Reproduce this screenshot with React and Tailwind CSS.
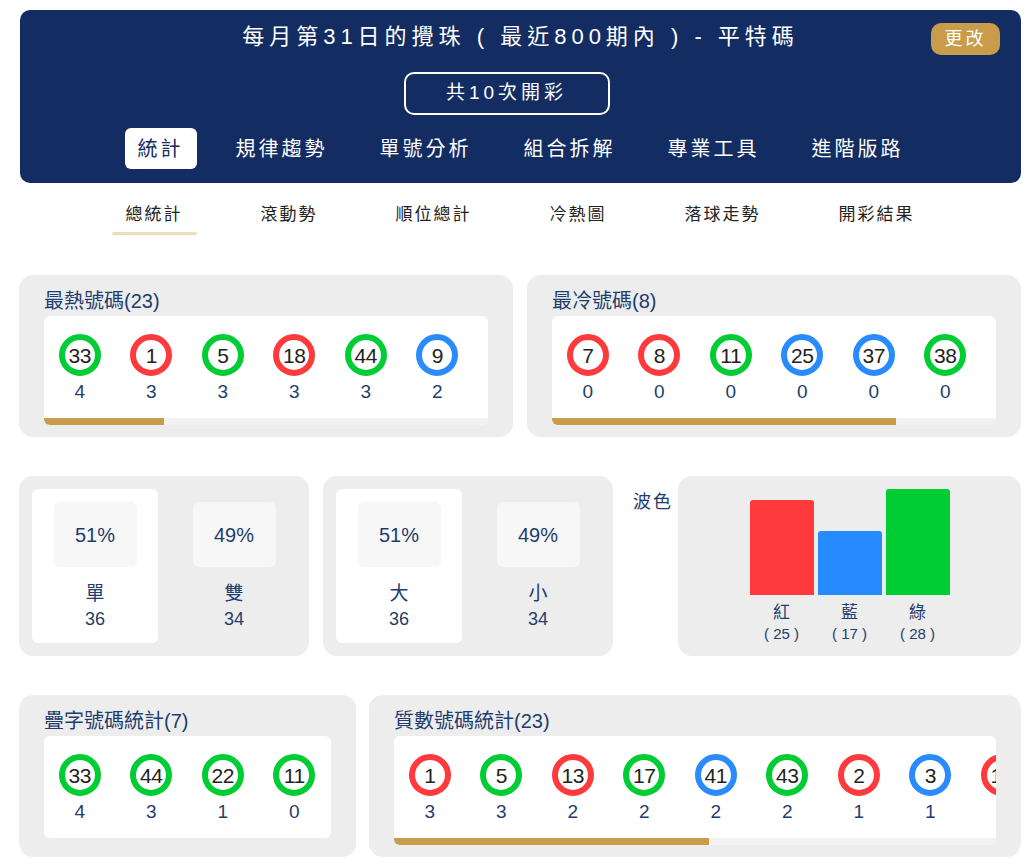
import React from 'react';

const ringColor = {
  r: 'border-[#ff3a3d]',
  g: 'border-[#00cc33]',
  b: 'border-[#2a8bff]',
};

const hotBalls = [
  { n: 33, c: 'g', v: 4 },
  { n: 1, c: 'r', v: 3 },
  { n: 5, c: 'g', v: 3 },
  { n: 18, c: 'r', v: 3 },
  { n: 44, c: 'g', v: 3 },
  { n: 9, c: 'b', v: 2 },
];

const coldBalls = [
  { n: 7, c: 'r', v: 0 },
  { n: 8, c: 'r', v: 0 },
  { n: 11, c: 'g', v: 0 },
  { n: 25, c: 'b', v: 0 },
  { n: 37, c: 'b', v: 0 },
  { n: 38, c: 'g', v: 0 },
];

const doubleBalls = [
  { n: 33, c: 'g', v: 4 },
  { n: 44, c: 'g', v: 3 },
  { n: 22, c: 'g', v: 1 },
  { n: 11, c: 'g', v: 0 },
];

const primeBalls = [
  { n: 1, c: 'r', v: 3 },
  { n: 5, c: 'g', v: 3 },
  { n: 13, c: 'r', v: 2 },
  { n: 17, c: 'g', v: 2 },
  { n: 41, c: 'b', v: 2 },
  { n: 43, c: 'g', v: 2 },
  { n: 2, c: 'r', v: 1 },
  { n: 3, c: 'b', v: 1 },
  { n: 19, c: 'r', v: 1 },
];

const tabs = ['統計', '規律趨勢', '單號分析', '組合拆解', '專業工具', '進階版路'];
const subTabs = ['總統計', '滾動勢', '順位總計', '冷熱圖', '落球走勢', '開彩結果'];

function Ball({ n, c, v }) {
  return (
    <div className="flex w-[71.5px] flex-none flex-col items-center">
      <div
        className={`flex h-[42px] w-[42px] items-center justify-center rounded-full border-[6px] bg-white text-[21px] leading-none tracking-[-0.5px] text-[#231f1c] ${ringColor[c]}`}
      >
        {n}
      </div>
      <div className="mt-[6px] text-[19px] leading-[20px] text-[#1f3d6e]">{v}</div>
    </div>
  );
}

// 號碼卡片 (bar = 捲動條的金色寬度)
function BallCard({ title, balls, bar }) {
  return (
    <div className="flex h-full flex-col rounded-[14px] bg-[#ededed] px-[25px] pb-[12px] pt-[14px]">
      <div className="mb-[3px] text-[20px] leading-[24px] text-[#1f3d6e]">{title}</div>
      <div className="overflow-hidden rounded-[6px] bg-white">
        <div className="flex pb-[16px] pt-[18px]">
          {balls.map((b, i) => (
            <Ball key={i} {...b} />
          ))}
        </div>
        {bar != null && (
          <div className="h-[7px] w-full bg-[#f2f2f2]">
            <div className="h-full bg-[#c89c4a]" style={{ width: bar }} />
          </div>
        )}
      </div>
    </div>
  );
}

function PercentCol({ pct, label, count, active }) {
  return (
    <div className={`flex flex-col items-center rounded-[6px] pb-[14px] pt-[13px] ${active ? 'bg-white' : ''}`}>
      <div className="flex h-[65px] w-[83px] items-center justify-center rounded-[6px] bg-[#f7f7f7] text-[20px] text-[#1f3d6e]">
        {pct}
      </div>
      <div className="mt-[17px] text-[19px] leading-[20px] text-[#1f3d6e]">{label}</div>
      <div className="mt-[5px] text-[18px] leading-[20px] text-[#1f3d6e]">{count}</div>
    </div>
  );
}

function PercentCard({ items }) {
  return (
    <div className="grid grid-cols-2 gap-[13px] rounded-[14px] bg-[#ededed] p-[13px] pr-[12px]">
      {items.map((it, i) => (
        <PercentCol key={i} {...it} active={i === 0} />
      ))}
    </div>
  );
}

const waves = [
  { label: '紅', n: 25, color: 'bg-[#ff3a3c]' },
  { label: '藍', n: 17, color: 'bg-[#268bff]' },
  { label: '綠', n: 28, color: 'bg-[#00cc33]' },
];

export default function App() {
  return (
    <div className="min-h-[866px] bg-white font-['Liberation_Sans','Noto_Sans_CJK_TC',sans-serif]">
      <div className="ml-[19px] w-[1002px] pt-[10px]">
        {/* 標題區 */}
        <div className="relative ml-px flex flex-col items-center rounded-[10px] bg-[#132d62] pb-[14px] pt-[13px] text-white">
          <div className="text-[22px] leading-[28px] tracking-[5px]">每月第31日的攪珠 ( 最近800期內 ) - 平特碼</div>
          <button className="absolute right-[21px] top-[13px] h-[32px] w-[69px] rounded-[10px] bg-[#c89c4a] text-[18px] tracking-[3px] text-white">
            更改
          </button>
          <div className="mr-[28px] mt-[21px] flex h-[43px] w-[206px] items-center justify-center rounded-[10px] border-2 border-white text-[19px] tracking-[4px]">
            共10次開彩
          </div>
          <div className="mt-[13px] flex gap-[26px]">
            {tabs.map((t, i) => (
              <div
                key={t}
                className={`flex h-[41px] items-center rounded-[6px] px-[13px] text-[20px] tracking-[3px] ${i === 0 ? 'bg-white text-[#132d62]' : 'text-white'}`}
              >
                {t}
              </div>
            ))}
          </div>
        </div>

        {/* 子分頁 */}
        <div className="mt-[20px] flex justify-center gap-[50px]">
          {subTabs.map((t, i) => (
            <div key={t} className="flex flex-col items-center">
              <div className="px-[14px] text-[17px] leading-[24px] tracking-[2px] text-[#222]">{t}</div>
              <div className={`mt-[5px] h-[3px] w-full rounded-full ${i === 0 ? 'bg-[#eedcb8]' : ''}`} />
            </div>
          ))}
        </div>

        {/* 最熱 / 最冷 */}
        <div className="mt-[40px] grid grid-cols-2 gap-[14px]">
          <BallCard title="最熱號碼(23)" balls={hotBalls} bar={120} />
          <BallCard title="最冷號碼(8)" balls={coldBalls} bar={344} />
        </div>

        {/* 單雙 / 大小 / 波色 */}
        <div className="mt-[39px] flex">
          <div className="w-[290px]">
            <PercentCard
              items={[
                { pct: '51%', label: '單', count: 36 },
                { pct: '49%', label: '雙', count: 34 },
              ]}
            />
          </div>
          <div className="ml-[14px] w-[290px]">
            <PercentCard
              items={[
                { pct: '51%', label: '大', count: 36 },
                { pct: '49%', label: '小', count: 34 },
              ]}
            />
          </div>
          <div className="ml-[20px] mt-[15px] text-[18px] leading-[22px] tracking-[2px] text-[#1f3d6e]">波色</div>
          <div className="ml-[5px] flex flex-1 justify-center rounded-[14px] bg-[#ededed] pb-[12px] pt-[13px]">
            <div className="flex items-end gap-[4px]">
              {waves.map((w) => (
                <div key={w.label} className="flex w-[64px] flex-col items-center">
                  <div className={`w-full rounded-t-[3px] ${w.color}`} style={{ height: Math.round(w.n * 3.79) }} />
                  <div className="mt-[8px] text-[17px] leading-[20px] text-[#1f3d6e]">{w.label}</div>
                  <div className="mt-px whitespace-pre text-[15px] leading-[20px] text-[#1f3d6e]">( {w.n} )</div>
                </div>
              ))}
            </div>
          </div>
        </div>

        {/* 疊字 / 質數 */}
        <div className="mt-[39px] flex items-stretch gap-[13px]">
          <div className="w-[337px] flex-none">
            <BallCard title="疊字號碼統計(7)" balls={doubleBalls} />
          </div>
          <div className="min-w-0 flex-1">
            <BallCard title="質數號碼統計(23)" balls={primeBalls} bar={315} />
          </div>
        </div>
      </div>
    </div>
  );
}
